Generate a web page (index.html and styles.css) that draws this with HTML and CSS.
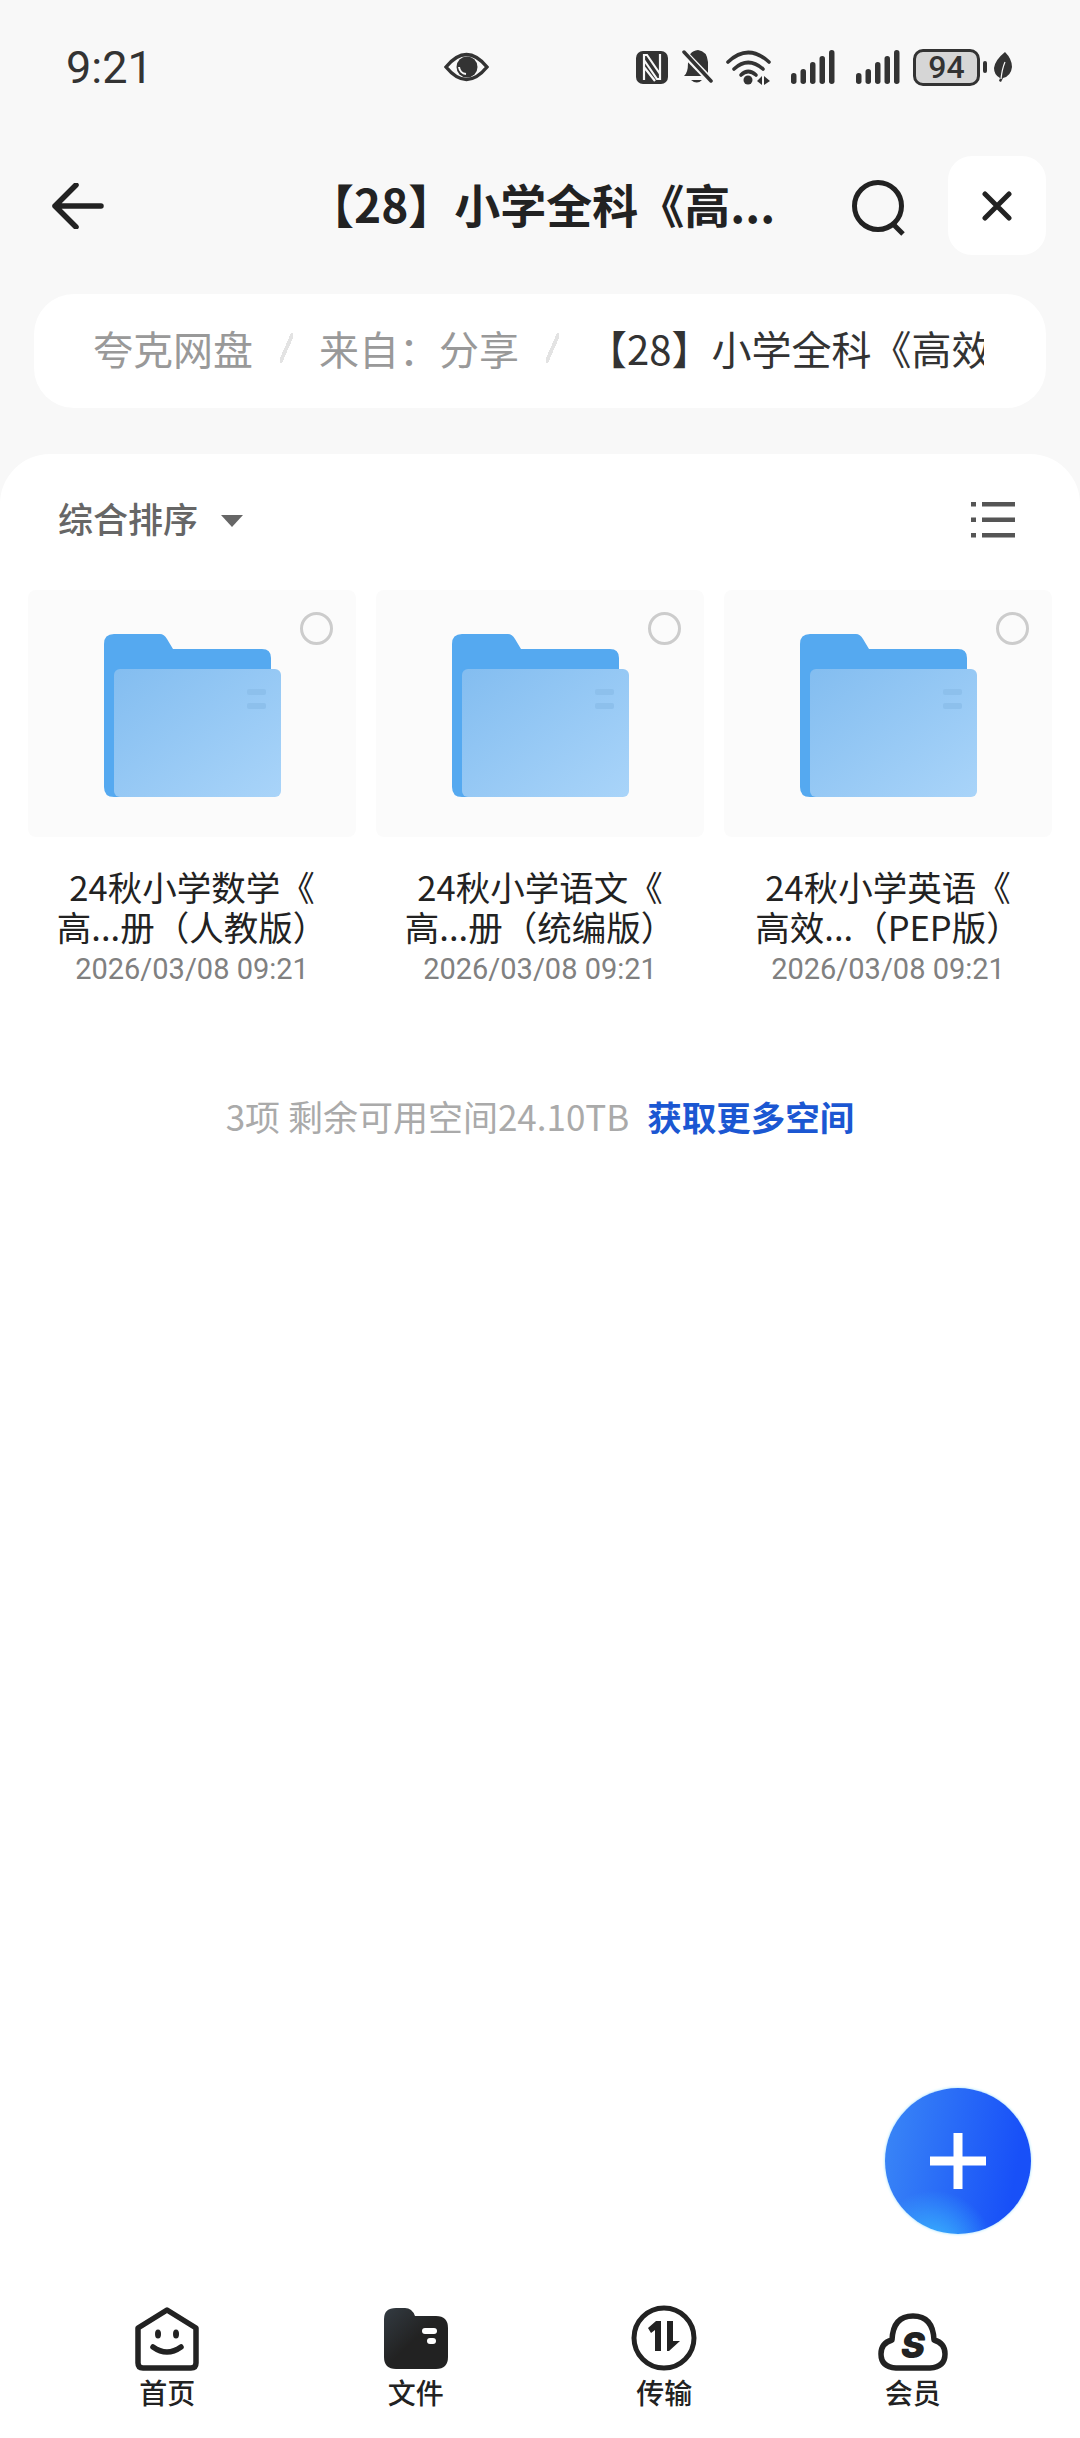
FILE: index.html
```html
<!DOCTYPE html>
<html lang="zh-CN">
<head>
  <meta charset="UTF-8">
  <title>夸克网盘</title>
  <link rel="stylesheet" href="styles.css">
</head>
<body>
  <!-- Status bar -->
  <div class="status-bar">
    <span class="time">9:21</span>
    <svg class="eye" width="45" height="32" viewBox="0 0 45 32">
      <path d="M2 16 Q22.500 -9 43 16 Q22.500 41 2 16 Z" fill="none" stroke="#333" stroke-width="3.500"/>
      <circle cx="23" cy="16" r="10.500" fill="#333"/>
      <path d="M15 16 A8 8 0 0 0 22 23" fill="none" stroke="#f8f8f8" stroke-width="2"/>
    </svg>
    <div class="status-icons">
      <svg width="32" height="34" viewBox="0 0 32 34">
        <rect x="0" y="1" width="32" height="33" rx="7" fill="#333"/>
        <path d="M8 30 V5 H11 L24 24 M24 4 V29 H21 L8 10 M8 17 L19 31" fill="none" stroke="#f8f8f8" stroke-width="2.200"/>
      </svg>
      <svg class="bell" width="32" height="36" viewBox="0 0 32 36">
        <path d="M3 27 Q7 24 7 14 Q7 2 17 1 Q26 2 27 13 V27 Z" fill="#333"/>
        <path d="M10 31 H21 Q16 36 10 31 Z" fill="#333"/>
        <path d="M2 3 L30 32" stroke="#f8f8f8" stroke-width="7"/>
        <path d="M3 3 L30 32" stroke="#333" stroke-width="3.500" stroke-linecap="round"/>
      </svg>
      <svg width="45" height="36" viewBox="0 0 45 36">
        <g fill="none" stroke="#333" stroke-width="3.600" stroke-linecap="round">
          <path d="M2 13 Q22 -6 43 13"/>
          <path d="M8 20 Q22 7 37 20"/>
          <path d="M15 26 Q22 19 30 26"/>
        </g>
        <circle cx="22" cy="31" r="4.500" fill="#333"/>
        <path d="M36 27 V36 L31 32 Z M38 27 V36 L44 32 Z" fill="#333"/>
      </svg>
      <svg width="44" height="34" viewBox="0 0 44 34">
        <g fill="#333">
          <rect x="0" y="23" width="5.500" height="11" rx="2.700"/>
          <rect x="9.500" y="19" width="5.500" height="15" rx="2.700"/>
          <rect x="19" y="12" width="5.500" height="22" rx="2.700"/>
          <rect x="28.500" y="6" width="5.500" height="28" rx="2.700"/>
          <rect x="38" y="0" width="5.500" height="34" rx="2.700"/>
        </g>
      </svg>
      <svg class="signal-two" width="44" height="34" viewBox="0 0 44 34">
        <g fill="#333">
          <rect x="0" y="23" width="5.500" height="11" rx="2.700"/>
          <rect x="9.500" y="19" width="5.500" height="15" rx="2.700"/>
          <rect x="19" y="12" width="5.500" height="22" rx="2.700"/>
          <rect x="28.500" y="6" width="5.500" height="28" rx="2.700"/>
          <rect x="38" y="0" width="5.500" height="34" rx="2.700"/>
        </g>
      </svg>
      <div class="battery">94</div>
      <span class="battery-nub"></span>
      <svg class="leaf" width="18" height="30" viewBox="0 0 18 30">
        <path d="M11 0 Q18 7 18 15 Q17 24 9 26 L7 30 L5 29 L6 26 Q0 23 0 16 Q1 8 11 0 Z" fill="#333"/>
        <path d="M7 27 Q8 17 11 10" fill="none" stroke="#f8f8f8" stroke-width="1.200"/>
      </svg>
    </div>
  </div>

  <!-- Header -->
  <div class="header">
    <svg class="back" width="52" height="46" viewBox="0 0 52 46">
      <path d="M49 23 H3 M24 2 L3 23 L24 44" fill="none" stroke="#222" stroke-width="5.500" stroke-linecap="round" stroke-linejoin="round"/>
    </svg>
    <div class="title">【28】小学全科《高...</div>
    <svg class="search" width="54" height="56" viewBox="0 0 54 56">
      <circle cx="26" cy="26" r="23.500" fill="none" stroke="#222" stroke-width="5"/>
      <path d="M41 44 L51 54" stroke="#222" stroke-width="5"/>
    </svg>
    <div class="close">
      <svg width="30" height="30" viewBox="0 0 30 30">
        <path d="M3 3 L27 27 M27 3 L3 27" stroke="#222" stroke-width="5" stroke-linecap="round"/>
      </svg>
    </div>
  </div>

  <!-- Breadcrumb -->
  <div class="breadcrumb">
    <div class="crumbs">
      <span>夸克网盘</span>
      <i class="sep"></i>
      <span>来自：分享</span>
      <i class="sep"></i>
      <span class="current">【28】小学全科《高效</span>
    </div>
  </div>

  <!-- File sheet -->
  <div class="sheet">
    <div class="sort-row">
      <span class="sort-label">综合排序</span>
      <span class="sort-arrow"></span>
      <svg class="list-icon" width="44" height="36" viewBox="0 0 44 36">
        <g fill="#555">
          <rect x="0" y="0" width="5" height="4.500"/>
          <rect x="11" y="0" width="33" height="4.500"/>
          <rect x="0" y="15.500" width="5" height="4.500"/>
          <rect x="11" y="15.500" width="33" height="4.500"/>
          <rect x="0" y="31" width="5" height="4.500"/>
          <rect x="11" y="31" width="33" height="4.500"/>
        </g>
      </svg>
    </div>

    <svg width="0" height="0" class="defs">
      <defs>
        <linearGradient id="folderFront" x1="0" y1="0" x2="1" y2="1">
          <stop offset="0" stop-color="#83bdf0"/>
          <stop offset="1" stop-color="#a9d4f9"/>
        </linearGradient>
        <symbol id="folder" viewBox="0 0 177 163">
          <path d="M0 10 Q0 0 10 0 H56 Q60 0 63 5 L69 15 H158 Q167 15 167 24 V163 H10 Q0 163 0 153 Z" fill="#55a9f0"/>
          <rect x="10" y="35" width="167" height="128" rx="6" fill="url(#folderFront)"/>
          <rect x="143" y="55" width="19" height="6" rx="2" fill="#8dc0ec"/>
          <rect x="143" y="69" width="19" height="6" rx="2" fill="#8dc0ec"/>
        </symbol>
      </defs>
    </svg>

    <div class="grid">
      <div class="item">
        <div class="thumb">
          <svg class="folder" width="177" height="163"><use href="#folder"/></svg>
          <span class="radio"></span>
        </div>
        <div class="name">24秋小学数学《</div>
        <div class="name">高...册（人教版）</div>
        <div class="date">2026/03/08 09:21</div>
      </div>
      <div class="item">
        <div class="thumb">
          <svg class="folder" width="177" height="163"><use href="#folder"/></svg>
          <span class="radio"></span>
        </div>
        <div class="name">24秋小学语文《</div>
        <div class="name">高...册（统编版）</div>
        <div class="date">2026/03/08 09:21</div>
      </div>
      <div class="item">
        <div class="thumb">
          <svg class="folder" width="177" height="163"><use href="#folder"/></svg>
          <span class="radio"></span>
        </div>
        <div class="name">24秋小学英语《</div>
        <div class="name">高效...（PEP版）</div>
        <div class="date">2026/03/08 09:21</div>
      </div>
    </div>

    <div class="summary">
      <span>3项 剩余可用空间24.10TB</span>
      <a class="more">获取更多空间</a>
    </div>

    <div class="fab">
      <svg width="56" height="56" viewBox="0 0 56 56">
        <path d="M28 0 V56 M0 28 H56" stroke="#fff" stroke-width="9"/>
      </svg>
    </div>

    <!-- Bottom tabs -->
    <div class="tabbar">
      <div class="tab">
        <svg width="64" height="64" viewBox="0 0 64 64">
          <path d="M32 3 L61 21 V56 Q61 61 56 61 H8 Q3 61 3 56 V21 Z" fill="none" stroke="#222" stroke-width="5.500" stroke-linejoin="round"/>
          <ellipse cx="23" cy="27" rx="3" ry="4.500" fill="#222"/>
          <ellipse cx="41" cy="27" rx="3" ry="4.500" fill="#222"/>
          <path d="M18 40 Q32 50 46 40" fill="none" stroke="#222" stroke-width="5.500" stroke-linecap="round"/>
        </svg>
        <span>首页</span>
      </div>
      <div class="tab">
        <svg width="64" height="64" viewBox="0 0 64 64">
          <defs>
            <linearGradient id="fileFill" x1="0" y1="0" x2="1" y2="1">
              <stop offset="0" stop-color="#333b42"/>
              <stop offset="0.500" stop-color="#222"/>
            </linearGradient>
          </defs>
          <path d="M0 12 Q0 1 12 1 H21 Q28 1 31 9 H52 Q64 9 64 21 V50 Q64 62 52 62 H12 Q0 62 0 50 Z" fill="url(#fileFill)"/>
          <rect x="38" y="21" width="15" height="6" rx="3" fill="#fff"/>
          <rect x="43" y="31" width="9" height="6" rx="3" fill="#fff"/>
        </svg>
        <span>文件</span>
      </div>
      <div class="tab">
        <svg width="66" height="66" viewBox="0 0 66 66">
          <circle cx="33" cy="33" r="30" fill="none" stroke="#222" stroke-width="5"/>
          <path d="M17 23 L25 16 H30 V46 H24 V25 L20 28 Z" fill="#222"/>
          <path d="M36 16 H42 V36 H49 L38 46 H36 Z" fill="#222"/>
        </svg>
        <span>传输</span>
      </div>
      <div class="tab">
        <svg width="70" height="58" viewBox="0 0 70 58">
          <path d="M18 55 Q3 54 3 41 Q3 30 14 27 Q15 3 35 3 Q55 3 56 27 Q67 30 67 41 Q67 54 52 55 Z" fill="none" stroke="#222" stroke-width="5.500" stroke-linejoin="round"/>
          <text class="tab-logo" x="35" y="45" text-anchor="middle">S</text>
        </svg>
        <span>会员</span>
      </div>
    </div>
  </div>
</body>
</html>
```

FILE: styles.css
```css
* {
  box-sizing: border-box;
}
html, body {
  margin: 0;
  height: 2438px;
}
body {
  background: #f8f8f8;
  font-family: "Noto Sans CJK SC", "Noto Sans", sans-serif;
  color: #222;
  display: flex;
  flex-direction: column;
  overflow: hidden;
}
/* Status bar */
.status-bar {
  height: 134px;
  padding: 0 68px 0 66px;
  display: flex;
  align-items: center;
  flex-shrink: 0;
}
.time {
  width: 378px;
  font-family: Roboto, sans-serif;
  font-size: 45px;
  color: #333;
}
.status-icons {
  margin-left: auto;
  display: flex;
  align-items: center;
}
.bell {
  margin-left: 13px;
}
.status-icons svg:nth-child(3) {
  margin-left: 13px;
}
.status-icons svg:nth-child(4) {
  margin-left: 20px;
}
.signal-two {
  margin-left: 21px;
}
.battery {
  margin-left: 13px;
  width: 67px;
  height: 37px;
  border: 3px solid #333;
  border-radius: 10px;
  background: #d6d6d6;
  font-family: Roboto, sans-serif;
  font-size: 32px;
  font-weight: 500;
  line-height: 31px;
  text-align: center;
  color: #333;
}
.battery-nub {
  width: 4px;
  height: 12px;
  margin-left: 3px;
  background: #333;
  border-radius: 2px;
}
.leaf {
  margin-left: 7px;
}
/* Header */
.header {
  height: 99px;
  margin-top: 22px;
  padding-left: 52px;
  display: flex;
  align-items: center;
  flex-shrink: 0;
}
.title {
  width: 502px;
  margin-left: 204px;
  margin-right: 42px;
  margin-bottom: 5px;
  font-size: 46px;
  font-weight: 700;
  white-space: nowrap;
  overflow: hidden;
}
.back {
  flex-shrink: 0;
}
.search {
  flex-shrink: 0;
  margin-top: 5px;
}
.close {
  width: 98px;
  height: 99px;
  margin-left: 42px;
  background: #fff;
  border-radius: 24px;
  display: flex;
  align-items: center;
  justify-content: center;
  flex-shrink: 0;
}
/* Breadcrumb */
.breadcrumb {
  height: 114px;
  margin: 39px 34px 0 34px;
  padding: 0 62px 6px 59px;
  background: #fff;
  border-radius: 40px;
  display: flex;
  align-items: center;
  flex-shrink: 0;
}
.crumbs {
  width: 100%;
  display: flex;
  align-items: center;
  overflow: hidden;
  white-space: nowrap;
  font-size: 40px;
  color: #999;
}
.sep {
  width: 13px;
  height: 30px;
  margin: 0 26px 0 27px;
  flex-shrink: 0;
  background: linear-gradient(to bottom right, transparent 42%, #e3e3e3 42%, #e3e3e3 58%, transparent 58%);
}
.current {
  margin-left: 2px;
  color: #333;
}
/* Sheet */
.sheet {
  position: relative;
  flex: 1;
  margin-top: 46px;
  background: #fff;
  border-radius: 50px 50px 0 0;
  display: flex;
  flex-direction: column;
}
.sort-row {
  height: 136px;
  padding: 0 65px 0 58px;
  display: flex;
  align-items: center;
  flex-shrink: 0;
}
.sort-label {
  margin-bottom: 9px;
  font-size: 35px;
  font-weight: 500;
  color: #666;
}
.sort-arrow {
  margin-left: 23px;
  margin-bottom: 2px;
  border-top: 12px solid #666;
  border-left: 11px solid transparent;
  border-right: 11px solid transparent;
}
.list-icon {
  margin-left: auto;
  margin-bottom: 4px;
}
.defs {
  position: absolute;
}
.grid {
  padding: 0 28px;
  display: grid;
  grid-template-columns: repeat(3, 328px);
  column-gap: 20px;
}
.item {
  text-align: center;
}
.thumb {
  position: relative;
  height: 247px;
  padding-top: 44px;
  background: #fbfbfb;
  border-radius: 8px;
  margin-bottom: 29px;
}
.folder {
  display: block;
  margin: 0 auto;
}
.radio {
  position: absolute;
  top: 22px;
  right: 23px;
  width: 33px;
  height: 33px;
  border: 3px solid #ccc;
  border-radius: 50%;
  background: #fbfbfb;
}
.name {
  font-size: 34.500px;
  line-height: 40px;
  color: #222;
  white-space: nowrap;
}
.date {
  margin-top: 5px;
  font-family: Roboto, sans-serif;
  font-size: 29px;
  line-height: 36px;
  color: #808080;
}
.summary {
  margin-top: 106px;
  display: flex;
  justify-content: center;
  align-items: center;
  gap: 18px;
  font-size: 35px;
  line-height: 46px;
  color: #aaa;
}
.more {
  font-size: 34.500px;
  font-weight: 700;
  color: #1b57d2;
}
.fab {
  position: absolute;
  right: 49px;
  bottom: 204px;
  width: 146px;
  height: 146px;
  border-radius: 50%;
  background:
    radial-gradient(circle at 33% 112%, #3cc0ff 0, rgba(60, 192, 255, 0) 32%),
    linear-gradient(100deg, #3b88f6 0%, #1850f8 85%);
  box-shadow: 0 0 3px #8fdcff;
  display: flex;
  align-items: center;
  justify-content: center;
}
.tabbar {
  margin-top: auto;
  height: 138px;
  padding: 0 43px;
  display: grid;
  grid-template-columns: repeat(4, 248.500px);
  flex-shrink: 0;
}
.tab {
  display: flex;
  flex-direction: column;
  align-items: center;
  justify-content: flex-end;
  font-size: 28px;
  font-weight: 500;
  line-height: 40px;
  color: #222;
}
.tab svg {
  flex-shrink: 0;
  margin-bottom: 1px;
}
.tab span {
  margin-bottom: 26px;
}
.tab-logo {
  font-family: Inter, sans-serif;
  font-size: 36px;
  font-weight: 900;
  font-style: italic;
  fill: #222;
}
```
